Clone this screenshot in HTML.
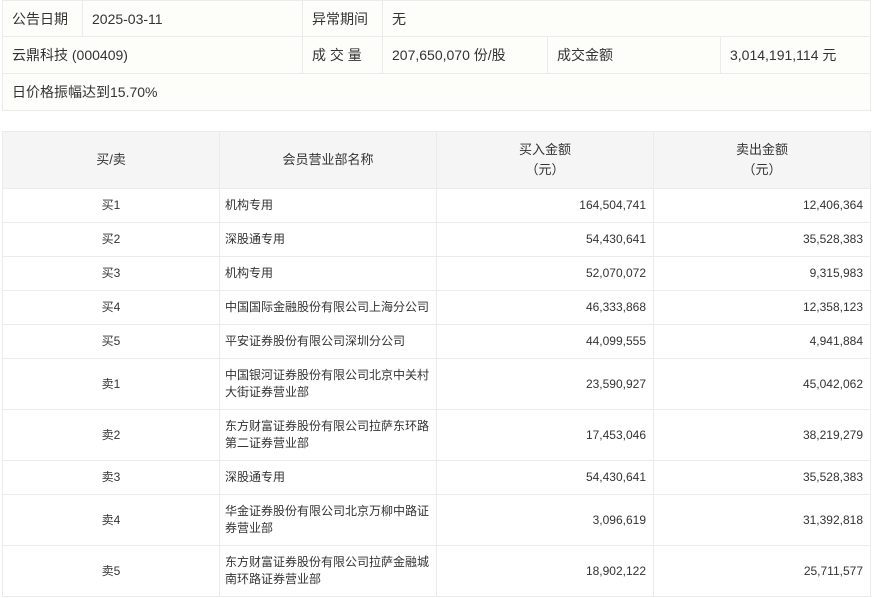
<!DOCTYPE html>
<html><head><meta charset="utf-8"><style>
*{margin:0;padding:0;box-sizing:border-box}
body{width:874px;height:598px;background:#fff;font-family:"Liberation Sans","Noto Sans CJK SC",sans-serif;color:#333;overflow:hidden}
table{border-collapse:collapse;table-layout:fixed;position:absolute}
td{border:1px solid #ebebeb;overflow:hidden;white-space:nowrap}
#t1{left:2px;top:0;width:868px;background:#fdfdf9;font-size:14px}
#t1 td{padding-left:9px;height:37px}
#t1 tr.f td{height:36px}
#t2{left:2px;top:131px;width:868px;font-size:12px}
#t2 td{line-height:17px}
#t2 tr.h td{background:#f5f5f5;height:57px;text-align:center;font-size:13px;line-height:20px}
#t2 td.c{text-align:center}
#t2 td.n{padding-left:5px;white-space:normal}
#t2 td.r{text-align:right;padding-right:7px}
tr.s td{height:34px}
tr.d td{height:51px}
</style></head><body>
<table id="t1">
<colgroup><col style="width:80px"><col style="width:220px"><col style="width:80px"><col style="width:165px"><col style="width:173px"><col style="width:150px"></colgroup>
<tr class="f"><td>公告日期</td><td>2025-03-11</td><td>异常期间</td><td colspan="3">无</td></tr>
<tr><td colspan="2">云鼎科技 (000409)</td><td>成 交 量</td><td>207,650,070 份/股</td><td>成交金额</td><td>3,014,191,114 元</td></tr>
<tr><td colspan="6">日价格振幅达到15.70%</td></tr>
</table>
<table id="t2">
<colgroup><col style="width:217px"><col style="width:217px"><col style="width:217px"><col style="width:217px"></colgroup>
<tr class="h"><td>买/卖</td><td>会员营业部名称</td><td>买入金额<br>（元）</td><td>卖出金额<br>（元）</td></tr>
<tr class="s"><td class="c">买1</td><td class="n">机构专用</td><td class="r">164,504,741</td><td class="r">12,406,364</td></tr>
<tr class="s"><td class="c">买2</td><td class="n">深股通专用</td><td class="r">54,430,641</td><td class="r">35,528,383</td></tr>
<tr class="s"><td class="c">买3</td><td class="n">机构专用</td><td class="r">52,070,072</td><td class="r">9,315,983</td></tr>
<tr class="s"><td class="c">买4</td><td class="n">中国国际金融股份有限公司上海分公司</td><td class="r">46,333,868</td><td class="r">12,358,123</td></tr>
<tr class="s"><td class="c">买5</td><td class="n">平安证券股份有限公司深圳分公司</td><td class="r">44,099,555</td><td class="r">4,941,884</td></tr>
<tr class="d"><td class="c">卖1</td><td class="n">中国银河证券股份有限公司北京中关村<br>大街证券营业部</td><td class="r">23,590,927</td><td class="r">45,042,062</td></tr>
<tr class="d"><td class="c">卖2</td><td class="n">东方财富证券股份有限公司拉萨东环路<br>第二证券营业部</td><td class="r">17,453,046</td><td class="r">38,219,279</td></tr>
<tr class="s"><td class="c">卖3</td><td class="n">深股通专用</td><td class="r">54,430,641</td><td class="r">35,528,383</td></tr>
<tr class="d"><td class="c">卖4</td><td class="n">华金证券股份有限公司北京万柳中路证<br>券营业部</td><td class="r">3,096,619</td><td class="r">31,392,818</td></tr>
<tr class="d"><td class="c">卖5</td><td class="n">东方财富证券股份有限公司拉萨金融城<br>南环路证券营业部</td><td class="r">18,902,122</td><td class="r">25,711,577</td></tr>
</table>
</body></html>
